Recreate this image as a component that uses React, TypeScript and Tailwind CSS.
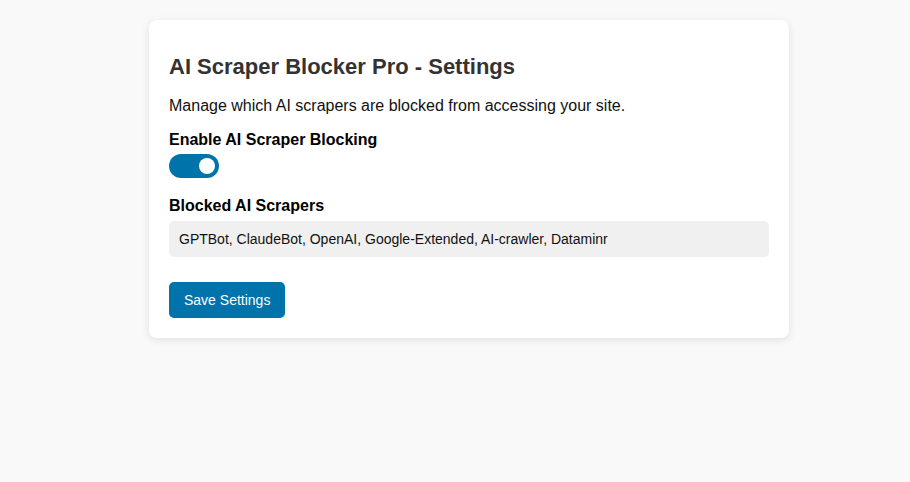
import { useState } from 'react';

const SCRAPERS = 'GPTBot, ClaudeBot, OpenAI, Google-Extended, AI-crawler, Dataminr';

export default function App() {
  const [enabled, setEnabled] = useState(true);
  const [value, setValue] = useState(SCRAPERS);

  return (
    <div className="min-h-[482px] bg-[#f9f9f9] pt-5 pl-[149px] font-['Liberation_Sans',Arial,sans-serif]">
      <div className="w-[640px] rounded-lg bg-white px-5 pt-5 pb-5 shadow-[0_2px_8px_rgba(0,0,0,0.1)]">
        <h2 className="mt-[15px] text-[22px] leading-[24px] font-bold text-[#333]">
          AI Scraper Blocker Pro - Settings
        </h2>
        <p className="mt-[17px] text-[16px] leading-[20px] text-[#111]">
          Manage which AI scrapers are blocked from accessing your site.
        </p>

        <label className="mt-[14px] block text-[16px] leading-[20px] font-bold text-black">
          Enable AI Scraper Blocking
        </label>
        <button
          onClick={() => setEnabled(!enabled)}
          className={`relative mt-[4px] block h-6 w-[50px] rounded-full ${enabled ? 'bg-[#0073aa]' : 'bg-[#ccc]'}`}
        >
          <span
            className={`absolute top-1 left-1 h-4 w-4 rounded-full bg-white transition-transform ${enabled ? 'translate-x-[26px]' : ''}`}
          />
        </button>

        <label className="mt-[18px] block text-[16px] leading-[20px] font-bold text-black">
          Blocked AI Scrapers
        </label>
        <input
          value={value}
          onChange={e => setValue(e.target.value)}
          className="mt-[5px] block h-9 w-full rounded-[5px] bg-[#f0f0f0] px-[10px] text-[14px] text-[#111] outline-none"
        />

        <button className="mt-[25px] block h-9 rounded-[5px] bg-[#0073aa] px-[15px] text-[14px] text-white">
          Save Settings
        </button>
      </div>
    </div>
  );
}
